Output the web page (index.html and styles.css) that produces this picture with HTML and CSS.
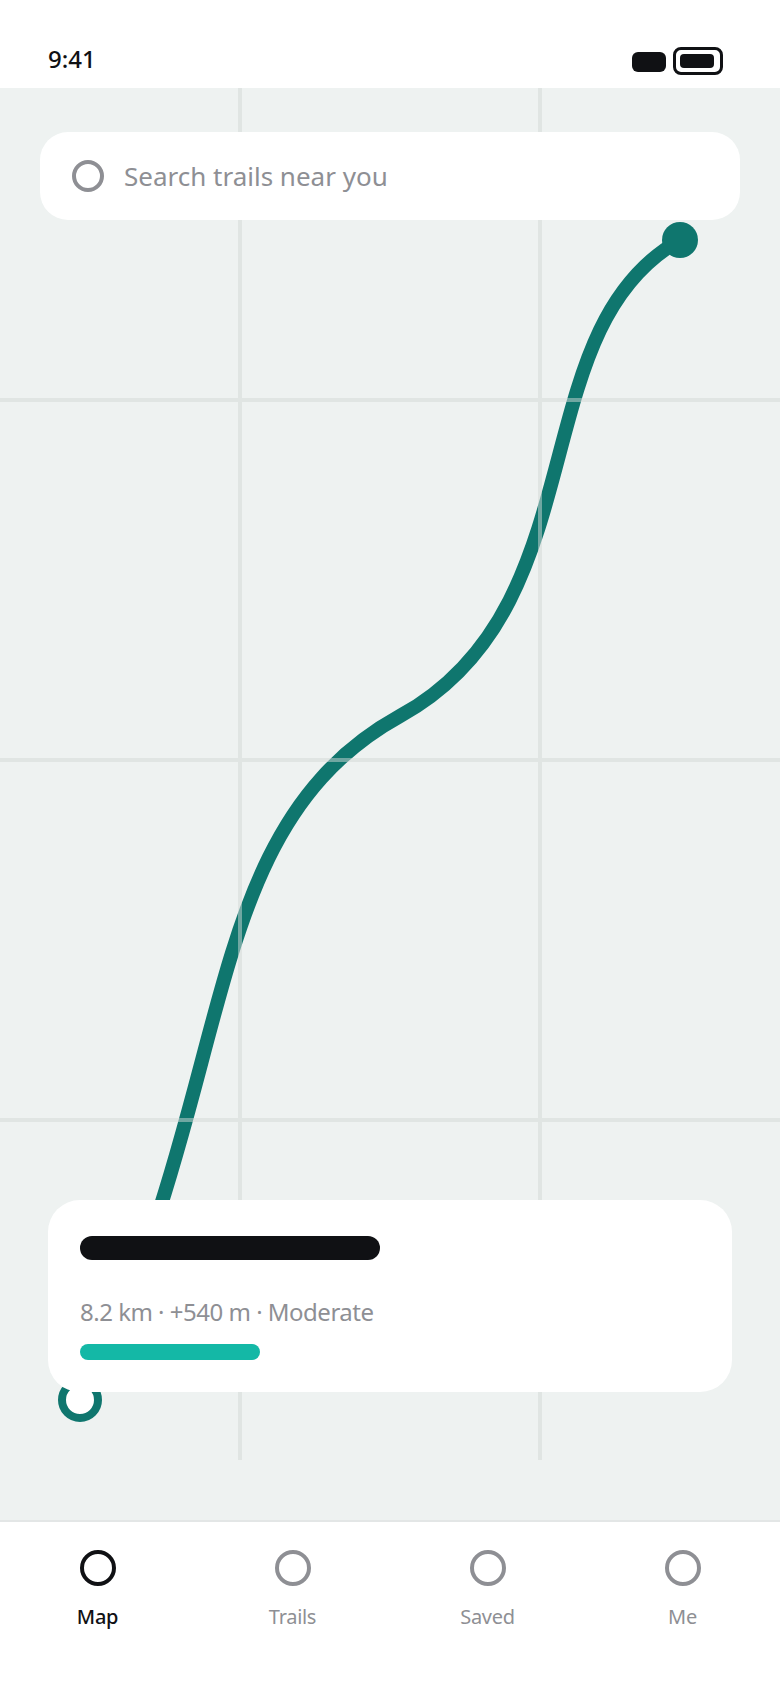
FILE: index.html
```html
<!DOCTYPE html>
<html lang="en">
<head>
    <meta charset="UTF-8">
    <meta name="viewport" content="width=device-width, initial-scale=1.0">
    <title>Trails</title>
    <link rel="stylesheet" href="styles.css">
</head>
<body>
    <div class="app">
        <header class="status-bar">
            <span class="status-time">9:41</span>
            <div class="status-icons">
                <span class="signal"></span>
                <span class="battery"><span class="battery-level"></span></span>
            </div>
        </header>

        <main class="map">
            <svg class="map-canvas" viewBox="0 88 780 1432" aria-hidden="true">
                <path class="route" d="M80 1400 C240 1100 190 832 400 716 C600 606 520 330 680 240"/>
                <g class="grid">
                    <path d="M0 400H780M0 760H780M0 1120H780M240 88V1460M540 88V1460"/>
                </g>
                <circle class="route-start" cx="80" cy="1400" r="18"/>
                <circle class="route-end" cx="680" cy="240" r="18"/>
            </svg>

            <div class="search">
                <span class="ring ring-search"></span>
                <span class="search-text">Search trails near you</span>
            </div>

            <section class="trail-card">
                <div class="trail-name"></div>
                <p class="trail-meta">8.2 km · +540 m · Moderate</p>
                <div class="trail-progress"></div>
            </section>
        </main>

        <nav class="tabs">
            <div class="tab active"><span class="ring"></span><span>Map</span></div>
            <div class="tab"><span class="ring"></span><span>Trails</span></div>
            <div class="tab"><span class="ring"></span><span>Saved</span></div>
            <div class="tab"><span class="ring"></span><span>Me</span></div>
        </nav>
    </div>
</body>
</html>
```

FILE: styles.css
```css
* {
    box-sizing: border-box;
}
body {
    margin: 0;
    background-color: white;
    font-family: "Noto Sans", "Open Sans", sans-serif;
    color: #101114;
}
.app {
    display: flex;
    flex-direction: column;
    width: 780px;
    height: 1688px;
    overflow: hidden;
}
.status-bar {
    display: flex;
    flex: 0 0 88px;
    align-items: center;
    justify-content: space-between;
    padding: 30px 57px 0 48px;
}
.status-time {
    font-size: 24px;
    font-weight: 500;
    line-height: 32px;
}
.status-icons {
    display: flex;
    align-items: center;
    gap: 7px;
    margin-top: 4px;
}
.signal {
    width: 34px;
    height: 20px;
    margin-top: 2px;
    border-radius: 6px;
    background-color: #101114;
}
.battery {
    display: block;
    width: 50px;
    height: 28px;
    padding: 4px;
    border: 3px solid #101114;
    border-radius: 8px;
}
.battery-level {
    display: block;
    width: 34px;
    height: 14px;
    border-radius: 4px;
    background-color: #101114;
}
.map {
    position: relative;
    flex: 1;
    background-color: #eef2f1;
}
.map-canvas {
    position: absolute;
    top: 0;
    left: 0;
    width: 780px;
    height: 1432px;
}
.route {
    fill: none;
    stroke: #0f766e;
    stroke-width: 14;
}
.grid {
    opacity: 0.5;
}
.grid path {
    fill: none;
    stroke: #d2d8d6;
    stroke-width: 4;
}
.route-start {
    fill: white;
    stroke: #0f766e;
    stroke-width: 8;
}
.route-end {
    fill: #0f766e;
}
.ring {
    display: block;
    width: 36px;
    height: 36px;
    border: 4px solid #8e8f94;
    border-radius: 50%;
}
.search {
    position: absolute;
    top: 44px;
    left: 40px;
    display: flex;
    align-items: center;
    gap: 20px;
    width: 700px;
    height: 88px;
    padding: 0 32px;
    border-radius: 28px;
    background-color: white;
}
.ring-search {
    width: 32px;
    height: 32px;
}
.search-text {
    font-size: 26px;
    color: #8e8f94;
}
.trail-card {
    position: absolute;
    top: 1112px;
    left: 48px;
    width: 684px;
    height: 192px;
    padding: 36px 32px 32px;
    border-radius: 32px;
    background-color: white;
}
.trail-name {
    width: 300px;
    height: 24px;
    border-radius: 12px;
    background-color: #101114;
}
.trail-meta {
    margin: 36px 0 16px;
    font-size: 24px;
    line-height: 32px;
    letter-spacing: -0.5px;
    color: #8e8f94;
}
.trail-progress {
    width: 180px;
    height: 16px;
    border-radius: 8px;
    background-color: #14b8a6;
}
.tabs {
    display: grid;
    flex: 0 0 168px;
    grid-template-columns: repeat(4, 1fr);
    align-content: start;
    padding-top: 28px;
    border-top: 2px solid #e3e6e6;
}
.tab {
    display: flex;
    flex-direction: column;
    align-items: center;
    gap: 17px;
    font-size: 20px;
    line-height: 28px;
    letter-spacing: -0.3px;
    color: #8e8f94;
}
.tab.active {
    font-weight: 500;
    color: #101114;
}
.tab.active .ring {
    border-color: #101114;
}
```
